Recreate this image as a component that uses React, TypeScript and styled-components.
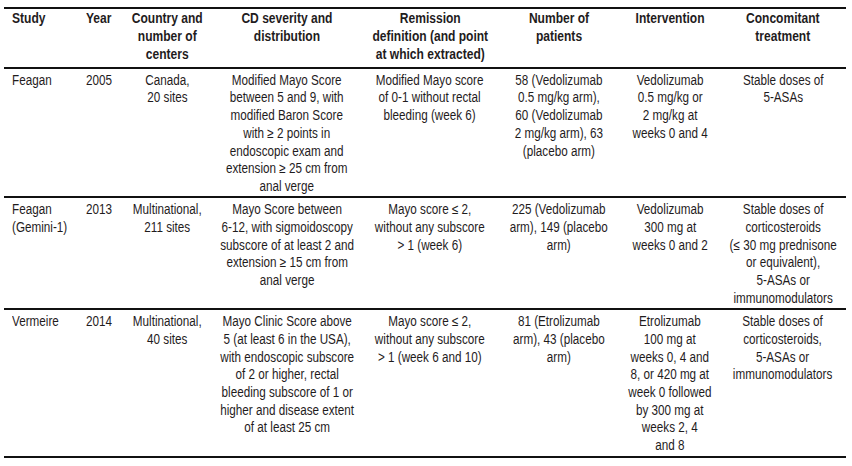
import React from "react";
import styled, { createGlobalStyle } from "styled-components";

const Global = createGlobalStyle`
  html, body { margin: 0; padding: 0; background: #ffffff; }
  body { font-family: "Liberation Sans", Arial, sans-serif; color: #1f1c1d; }
`;

const Page = styled.div`
  width: 852px;
  height: 466px;
  padding: 7px 6px 0 4px;
  box-sizing: border-box;
`;

const Table = styled.table`
  width: 842px;
  border-collapse: collapse;
  table-layout: fixed;
  font-size: 14px;
  line-height: 17.7px;
  border-top: 2px solid #111;
  border-bottom: 2px solid #111;
`;

const HeadCell = styled.th<{ $align?: string }>`
  font-weight: 700;
  vertical-align: top;
  padding: 1.3px 6px 3.3px ${(p) => (p.$align === "left" ? "8px" : "6px")};
  white-space: nowrap;
  border-bottom: 2px solid #111;
`;

const Row = styled.tr<{ $last?: boolean }>`
  border-bottom: ${(p) => (p.$last ? "none" : "2px solid #111")};
`;

const Cell = styled.td<{ $align?: string }>`
  vertical-align: top;
  padding: 3px 6px 0.7px ${(p) => (p.$align === "left" ? "8px" : "6px")};
  white-space: nowrap;
`;

/* Narrow type: the source uses a condensed grotesque */
const Squeeze = styled.div<{ $align?: string; $ratio: number }>`
  display: flex;
  justify-content: ${(p) => (p.$align === "left" ? "flex-start" : "center")};
  & > span {
    display: inline-block;
    text-align: ${(p) => (p.$align === "left" ? "left" : "center")};
    transform: scaleX(${(p) => p.$ratio});
    transform-origin: ${(p) => (p.$align === "left" ? "left top" : "center top")};
  }
`;

const widths = [74, 44, 90, 150, 136, 122, 100, 126];

const lines = (s: string) =>
  s.split("\n").map((l, i, a) => (
    <React.Fragment key={i}>
      {l}
      {i < a.length - 1 && <br />}
    </React.Fragment>
  ));

const headers: { t: string; align?: string }[] = [
  { t: "Study", align: "left" },
  { t: "Year", align: "left" },
  { t: "Country and\nnumber of\ncenters" },
  { t: "CD severity and\ndistribution" },
  { t: "Remission\ndefinition (and point\nat which extracted)" },
  { t: "Number of\npatients" },
  { t: "Intervention" },
  { t: "Concomitant\ntreatment" },
];

const rows: string[][] = [
  [
    "Feagan",
    "2005",
    "Canada,\n20 sites",
    "Modified Mayo Score\nbetween 5 and 9, with\nmodified Baron Score\nwith ≥ 2 points in\nendoscopic exam and\nextension ≥ 25 cm from\nanal verge",
    "Modified Mayo score\nof 0-1 without rectal\nbleeding (week 6)",
    "58 (Vedolizumab\n0.5 mg/kg arm),\n60 (Vedolizumab\n2 mg/kg arm), 63\n(placebo arm)",
    "Vedolizumab\n0.5 mg/kg or\n2 mg/kg at\nweeks 0 and 4",
    "Stable doses of\n5-ASAs",
  ],
  [
    "Feagan\n(Gemini-1)",
    "2013",
    "Multinational,\n211 sites",
    "Mayo Score between\n6-12, with sigmoidoscopy\nsubscore of at least 2 and\nextension ≥ 15 cm from\nanal verge",
    "Mayo score ≤ 2,\nwithout any subscore\n> 1 (week 6)",
    "225 (Vedolizumab\narm), 149 (placebo\narm)",
    "Vedolizumab\n300 mg at\nweeks 0 and 2",
    "Stable doses of\ncorticosteroids\n(≤ 30 mg prednisone\nor equivalent),\n5-ASAs or\nimmunomodulators",
  ],
  [
    "Vermeire",
    "2014",
    "Multinational,\n40 sites",
    "Mayo Clinic Score above\n5 (at least 6 in the USA),\nwith endoscopic subscore\nof 2 or higher, rectal\nbleeding subscore of 1 or\nhigher and disease extent\nof at least 25 cm",
    "Mayo score ≤ 2,\nwithout any subscore\n> 1 (week 6 and 10)",
    "81 (Etrolizumab\narm), 43 (placebo\narm)",
    "Etrolizumab\n100 mg at\nweeks 0, 4 and\n8, or 420 mg at\nweek 0 followed\nby 300 mg at\nweeks 2, 4\nand 8",
    "Stable doses of\ncorticosteroids,\n5-ASAs or\nimmunomodulators",
  ],
];

export default function App() {
  return (
    <Page>
      <Global />
      <Table>
        <colgroup>
          {widths.map((w, i) => (
            <col key={i} style={{ width: w }} />
          ))}
        </colgroup>
        <thead>
          <tr>
            {headers.map((h, i) => (
              <HeadCell key={i} $align={h.align}>
                <Squeeze $align={h.align} $ratio={0.86}>
                  <span>{lines(h.t)}</span>
                </Squeeze>
              </HeadCell>
            ))}
          </tr>
        </thead>
        <tbody>
          {rows.map((r, ri) => (
            <Row key={ri} $last={ri === rows.length - 1}>
              {r.map((c, ci) => {
                const align = ci < 2 ? "left" : "center";
                return (
                  <Cell key={ci} $align={align}>
                    <Squeeze $align={align} $ratio={0.835}>
                      <span>{lines(c)}</span>
                    </Squeeze>
                  </Cell>
                );
              })}
            </Row>
          ))}
        </tbody>
      </Table>
    </Page>
  );
}
